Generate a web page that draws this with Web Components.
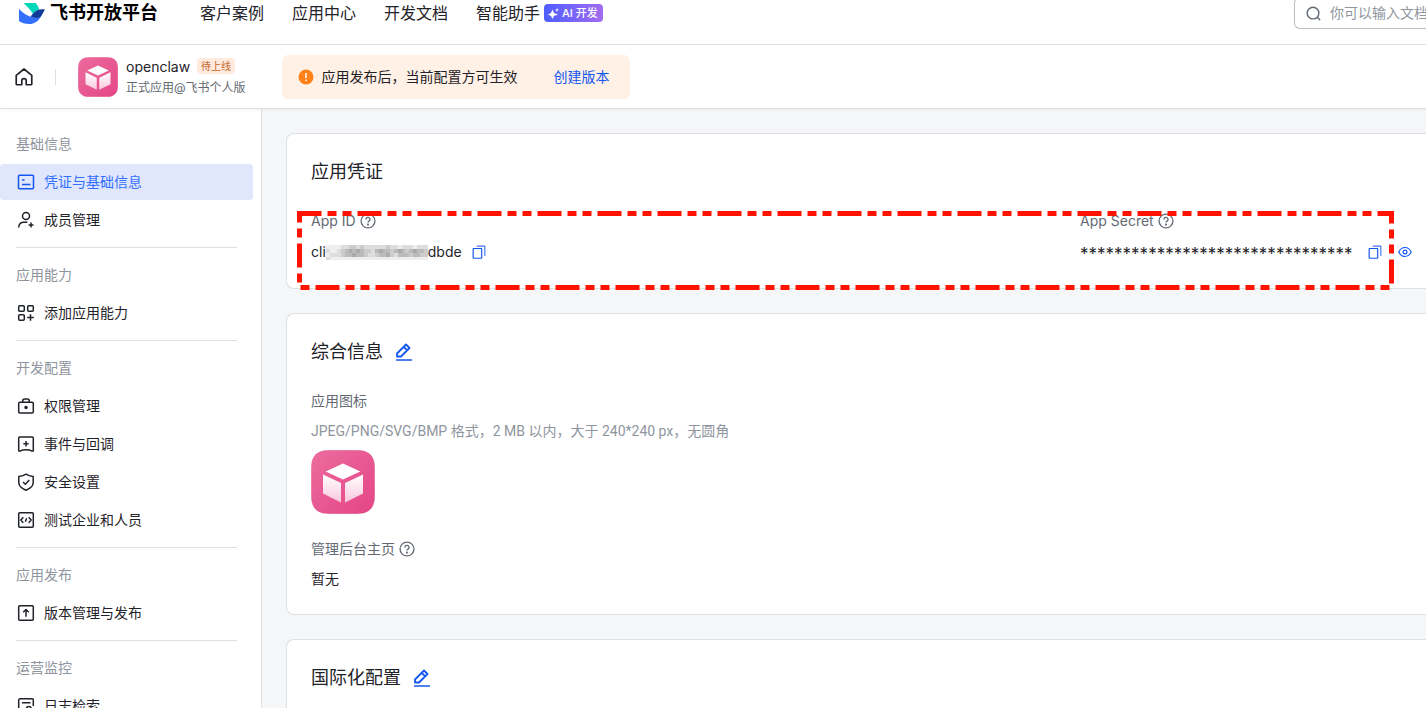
<!DOCTYPE html>
<html lang="zh-CN">
<head>
<meta charset="utf-8">
<meta name="viewport" content="width=device-width, initial-scale=1">
<title>飞书开放平台</title>
<style>
  html {
    --text: #1f2329;
    --muted: #646a73;
    --faint: #8f959e;
    --line: #dee0e3;
    --blue: #1456f0;
    height: 100%;
  }

  body {
    margin: 0;
    height: 100%;
    overflow: hidden;
    font-family: Inter, "Noto Sans CJK SC", sans-serif;
    font-size: 14px;
    line-height: 22px;
    color: var(--text);
  }
</style>
</head>
<body>
<op-app></op-app>

<script>
const icons = {
  home: '<path d="M2 7.500 9 1.800l7 5.700v7.700a.8.8 0 0 1-.8.8h-4.200v-3.500a2 2 0 0 0-4 0V16H2.800a.8.8 0 0 1-.8-.8z"/>',
  search: '<circle cx="8.500" cy="8.500" r="6.200"/><path d="m13 13 3 3"/>',
  card: '<rect x="1.500" y="2.200" width="15" height="13.600" rx="1"/><path d="M5 7h2.500M5 11.500h8.500"/>',
  member: '<circle cx="9" cy="5" r="3.500"/><path d="M1.800 16.500v-1a5 5 0 0 1 5-4.200h3.500M14 11.500v5M11.500 14h5"/>',
  apps: '<rect x="1.700" y="1.700" width="5.600" height="5.600" rx="1"/><rect x="10.700" y="1.700" width="5.600" height="5.600" rx="1"/><rect x="1.700" y="10.700" width="5.600" height="5.600" rx="1"/><path d="M13.500 10.200v6.600M10.200 13.500h6.600"/>',
  lock: '<rect x="1.700" y="5.200" width="14.600" height="10.800" rx="1.200"/><path d="M5.700 5V4a2 2 0 0 1 2-2h2.600a2 2 0 0 1 2 2v1"/><circle cx="9" cy="10.500" r="1" fill="currentColor"/>',
  event: '<path d="M1.700 16V3a1 1 0 0 1 1-1h12.600a1 1 0 0 1 1 1v13h-1.800c-1-.8-3-1.200-5.500-1.200S4.500 15.200 3.500 16zM9 6v5.400M6.300 8.700h5.400"/>',
  shield: '<path d="M9 1.200c2 1.400 4.500 2 7.200 2.200v6c0 3.600-3 6-7.200 7.800-4.200-1.800-7.200-4.200-7.200-7.800v-6C4.500 3.200 7 2.600 9 1.200z"/><path d="m6 9 2.300 2.200L12.300 7"/>',
  code: '<rect x="1.700" y="1.700" width="14.600" height="14.600" rx="1"/><path d="M6.300 6.200 3.800 9l2.500 2.800M11.700 6.200 14.200 9l-2.500 2.800M9.700 7.200l-1.400 3.600"/>',
  publish: '<rect x="1.700" y="1.700" width="14.600" height="14.600" rx="1"/><path d="M9 12.800V5.800M6.200 8.200 9 5.500l2.800 2.700"/>',
  log: '<path d="M8 16.300H2.700a1 1 0 0 1-1-1V3.200a1.500 1.500 0 0 1 1.500-1.500h12.100a1 1 0 0 1 1 1V9M5 5.800h8.500"/><circle cx="11.800" cy="12" r="2.500"/><path d="m13.800 14 2.500 2.500"/>',
  help: '<circle cx="9" cy="9" r="7.800"/><path d="M6.700 7.200a2.300 2.300 0 1 1 3.400 2c-.8.5-1.100.8-1.100 1.600"/><circle cx="9" cy="13" r=".5" fill="currentColor"/>',
  copy: '<rect x="1.500" y="4.500" width="11" height="12.500" rx=".5"/><path d="M6 1.500h10.500V14" opacity=".8"/>',
  eye: '<path d="M1 9c1.700-3.500 4.500-5.800 8-5.800S15.300 5.500 17 9c-1.700 3.500-4.500 5.800-8 5.800S2.700 12.500 1 9z"/><circle cx="9" cy="9" r="2.500"/>',
  edit: '<path d="M1 17h16" stroke-width="1.500"/><path d="M2 13.500V10.500L11 1.500l3.500 3.500L6 13.500z M8.800 4 12 7.200" stroke-width="1.800"/>'
};

class OpIcon extends HTMLElement {
  connectedCallback() {
    this.attachShadow({ mode: "open" });
    this.shadowRoot.innerHTML = `
      <style>
        :host {
          display: block;
          flex: none;
          width: 18px;
          height: 18px;
        }
        svg {
          display: block;
          width: 100%;
          height: 100%;
          fill: none;
          stroke: currentColor;
          stroke-width: 1.5;
          stroke-linejoin: round;
        }
      </style>
      <svg viewBox="0 0 18 18" aria-hidden="true">${icons[this.getAttribute("name")]}</svg>
    `;
  }
}

class OpAppLogo extends HTMLElement {
  constructor() {
    super();
    this.attachShadow({ mode: "open" });
    this.shadowRoot.innerHTML = `
      <style>
        :host {
          display: block;
          flex: none;
          width: 40px;
          height: 40px;
        }
        svg {
          display: block;
          width: 100%;
          height: 100%;
        }
      </style>
      <svg viewBox="0 0 64 64" role="img" aria-label="openclaw">
        <defs>
          <linearGradient id="bg" x1="0" y1="0" x2="1" y2="1">
            <stop offset="0" stop-color="#ec6c9e"/>
            <stop offset="1" stop-color="#e44586"/>
          </linearGradient>
          <linearGradient id="side" x1="0" y1="0" x2="0" y2="1">
            <stop offset="0" stop-color="#fff"/>
            <stop offset="1" stop-color="#f8c8dc"/>
          </linearGradient>
        </defs>
        <path fill="url(#bg)" stroke="#d0407c" stroke-opacity=".4" stroke-width=".6" d="M18 .3h28C58 .3 63.700 6 63.700 18v28C63.700 58 58 63.700 46 63.700H18C6 63.700.3 58 .3 46V18C.3 6 6 .3 18 .3z"/>
        <path fill="#fff" d="M32 13.500 49.300 21.500 32 29.500 14.700 21.500z"/>
        <path fill="url(#side)" d="M12 24.500 30 33v19.500L12 43.500zM52 24.500 34 33v19.500l18-9z"/>
      </svg>
    `;
  }
}

class OpHeader extends HTMLElement {
  constructor() {
    super();
    this.attachShadow({ mode: "open" });
    this.shadowRoot.innerHTML = `
      <style>
        :host {
          display: block;
          border-bottom: 1px solid var(--line);
        }
        header {
          display: flex;
          align-items: center;
          height: 26px;
          padding: 0 0 18px 18px;
          font-size: 16px;
          white-space: nowrap;
        }
        a {
          color: inherit;
          text-decoration: none;
        }
        .brand {
          display: flex;
          align-items: center;
          gap: 4px;
          font-size: 18px;
          font-weight: 700;
          color: #000;
        }
        .brand svg {
          width: 28px;
          height: 24px;
        }
        nav {
          display: flex;
          gap: 28px;
          flex: 1;
          margin-left: 42px;
        }
        .assistant {
          display: flex;
          align-items: center;
          gap: 4px;
        }
        .ai {
          display: flex;
          align-items: center;
          gap: 3px;
          box-sizing: border-box;
          height: 18px;
          padding: 0 5px 0 4px;
          border-radius: 4px;
          background: linear-gradient(90deg, #4e5eff, #a36cf0);
          color: #fff;
          font-size: 11px;
          font-weight: 500;
          line-height: 18px;
        }
        .ai svg {
          width: 11px;
          height: 11px;
        }
        .search {
          display: flex;
          align-items: center;
          gap: 8px;
          flex: none;
          box-sizing: border-box;
          width: 132px;
          height: 32px;
          padding-left: 10px;
          border: 1px solid #bbbfc4;
          border-right: 0;
          border-radius: 6px 0 0 6px;
          color: var(--muted);
        }
        .search op-icon {
          width: 17px;
          height: 17px;
        }
        input {
          flex: 1;
          min-width: 0;
          padding: 0;
          border: 0;
          outline: 0;
          background: none;
          font: inherit;
          font-size: 14px;
        }
        input::placeholder {
          color: var(--faint);
        }
      </style>
      <header>
        <a class="brand" href="#">
          <svg viewBox="0 0 28 24" aria-hidden="true">
            <path fill="#00d6b9" d="M5.500 2h12c2 2 3.200 4.200 3.700 6.500-2 .7-4 2-6.200 4.300C12.300 9 9 5 5.500 2z"/>
            <path fill="#3370ff" d="M1 8c4.500 4.500 9.500 7.800 15 8.500 3 .3 5.700-.8 8-2.800C21 20 16.500 23 11 23c-4 0-7.500-1.300-10-3z"/>
            <path fill="#133c9a" d="M12.500 15.500C16 11 20 7 27 8.500c-2 2.500-2.500 6-5 7.500-3 1.600-6.500 1-9.500-.5z"/>
          </svg>
          飞书开放平台
        </a>
        <nav>
          <a href="#">客户案例</a>
          <a href="#">应用中心</a>
          <a href="#">开发文档</a>
          <a href="#" class="assistant">智能助手
            <span class="ai">
              <svg viewBox="0 0 11 11" fill="#fff" aria-hidden="true"><path d="M4.500 1.500 6 5l4 1.500L6 8l-1.500 3L3 8 0 6.500 3 5zM9 0l.6 1.400L11 2l-1.400.6L9 4l-.6-1.400L7 2l1.400-.6z"/></svg>
              AI 开发
            </span>
          </a>
        </nav>
        <label class="search">
          <op-icon name="search"></op-icon>
          <input type="text" placeholder="你可以输入文档" aria-label="搜索">
        </label>
      </header>
    `;
  }
}

class OpAppBar extends HTMLElement {
  constructor() {
    super();
    this.attachShadow({ mode: "open" });
    this.shadowRoot.innerHTML = `
      <style>
        :host {
          display: flex;
          align-items: center;
          position: relative;
          height: 63px;
          padding-left: 14px;
          border-bottom: 1px solid var(--line);
          box-shadow: 0 1px 3px rgba(31, 35, 41, .06);
          white-space: nowrap;
        }
        a {
          color: inherit;
          text-decoration: none;
        }
        .home op-icon {
          width: 20px;
          height: 20px;
        }
        .split {
          width: 1px;
          height: 16px;
          margin: 0 22px 0 21px;
          background: var(--line);
        }
        .info {
          margin: 0 36px 0 8px;
          line-height: 21px;
        }
        .name {
          display: flex;
          align-items: center;
          gap: 7px;
        }
        .tag {
          padding: 0 4px;
          border-radius: 4px;
          background: #ffeadd;
          color: #c4662b;
          font-size: 10px;
          line-height: 16px;
        }
        .owner {
          color: var(--muted);
          font-size: 12px;
        }
        .notice {
          display: flex;
          align-items: center;
          gap: 8px;
          box-sizing: border-box;
          height: 44px;
          padding: 0 20px 0 16px;
          border-radius: 6px;
          background: #fff1e5;
        }
        .notice svg {
          width: 16px;
          height: 16px;
        }
        .notice a {
          margin-left: 28px;
          color: var(--blue);
        }
      </style>
      <a class="home" href="#" aria-label="首页"><op-icon name="home"></op-icon></a>
      <span class="split"></span>
      <op-app-logo></op-app-logo>
      <div class="info">
        <div class="name">openclaw <span class="tag">待上线</span></div>
        <div class="owner">正式应用@飞书个人版</div>
      </div>
      <div class="notice">
        <svg viewBox="0 0 16 16" aria-hidden="true">
          <circle cx="8" cy="8" r="7.500" fill="#ff811a"/>
          <path d="M8 4v5M8 10.500v1.500" stroke="#fff" stroke-width="1.500"/>
        </svg>
        <span>应用发布后，当前配置方可生效</span>
        <a href="#">创建版本</a>
      </div>
    `;
  }
}

class OpMenuGroup extends HTMLElement {
  connectedCallback() {
    this.attachShadow({ mode: "open" });
    this.shadowRoot.innerHTML = `
      <style>
        :host {
          display: block;
        }
        h2 {
          margin: 0;
          padding: 0 0 9px 16px;
          color: var(--faint);
          font-size: 14px;
          font-weight: 400;
        }
        .items {
          display: grid;
          gap: 2px;
        }
        :host(:not(:first-of-type))::before {
          content: "";
          display: block;
          height: 1px;
          margin: 9px 24px 16px 16px;
          background: var(--line);
        }
      </style>
      <h2>${this.getAttribute("label")}</h2>
      <div class="items"><slot></slot></div>
    `;
  }
}

class OpMenuItem extends HTMLElement {
  connectedCallback() {
    this.attachShadow({ mode: "open" });
    this.shadowRoot.innerHTML = `
      <style>
        :host {
          display: block;
          margin-right: 8px;
        }
        a {
          display: flex;
          align-items: center;
          gap: 9px;
          height: 36px;
          padding-left: 17px;
          border-radius: 4px;
          color: inherit;
          text-decoration: none;
        }
        :host([active]) a {
          background: #e0e6fc;
          color: #3370ff;
        }
        :host([active]) op-icon {
          color: var(--blue);
        }
      </style>
      <a href="#"><op-icon name="${this.getAttribute("icon")}"></op-icon><slot></slot></a>
    `;
  }
}

class OpSidebar extends HTMLElement {
  constructor() {
    super();
    this.attachShadow({ mode: "open" });
    this.shadowRoot.innerHTML = `
      <style>
        :host {
          display: block;
          box-sizing: border-box;
          padding-top: 24px;
          border-right: 1px solid var(--line);
          overflow: hidden;
        }
      </style>
      <nav>
        <op-menu-group label="基础信息">
          <op-menu-item icon="card" active>凭证与基础信息</op-menu-item>
          <op-menu-item icon="member">成员管理</op-menu-item>
        </op-menu-group>
        <op-menu-group label="应用能力">
          <op-menu-item icon="apps">添加应用能力</op-menu-item>
        </op-menu-group>
        <op-menu-group label="开发配置">
          <op-menu-item icon="lock">权限管理</op-menu-item>
          <op-menu-item icon="event">事件与回调</op-menu-item>
          <op-menu-item icon="shield">安全设置</op-menu-item>
          <op-menu-item icon="code">测试企业和人员</op-menu-item>
        </op-menu-group>
        <op-menu-group label="应用发布">
          <op-menu-item icon="publish">版本管理与发布</op-menu-item>
        </op-menu-group>
        <op-menu-group label="运营监控">
          <op-menu-item icon="log">日志检索</op-menu-item>
        </op-menu-group>
      </nav>
    `;
  }
}

class OpIconButton extends HTMLElement {
  connectedCallback() {
    this.attachShadow({ mode: "open" });
    this.shadowRoot.innerHTML = `
      <style>
        :host {
          display: block;
          --size: 14px;
        }
        button {
          display: block;
          padding: 0;
          border: 0;
          background: none;
          color: var(--blue);
          cursor: pointer;
        }
        op-icon {
          width: var(--size);
          height: var(--size);
        }
      </style>
      <button type="button" aria-label="${this.getAttribute("label")}"><op-icon name="${this.getAttribute("icon")}"></op-icon></button>
    `;
  }
}

class OpCard extends HTMLElement {
  connectedCallback() {
    this.attachShadow({ mode: "open" });
    this.shadowRoot.innerHTML = `
      <style>
        :host {
          display: block;
          position: relative;
          padding: 25px 0 24px 24px;
          border: 1px solid var(--line);
          border-right: 0;
          border-radius: 8px 0 0 8px;
          background: #fff;
        }
        .title {
          display: flex;
          align-items: center;
          gap: 12px;
          margin-bottom: 25px;
        }
        h1 {
          margin: 0;
          font-size: 18px;
          font-weight: 400;
          line-height: 26px;
        }
        op-icon-button {
          --size: 18px;
        }
      </style>
      <div class="title">
        <h1>${this.getAttribute("heading")}</h1>
        ${this.hasAttribute("editable") ? '<op-icon-button icon="edit" label="编辑"></op-icon-button>' : ""}
      </div>
      <slot></slot>
    `;
  }
}

class OpField extends HTMLElement {
  connectedCallback() {
    this.attachShadow({ mode: "open" });
    this.shadowRoot.innerHTML = `
      <style>
        :host {
          display: block;
        }
        .label {
          display: flex;
          align-items: center;
          gap: 4px;
          margin-bottom: 8px;
          color: var(--muted);
        }
        .label op-icon {
          width: 16px;
          height: 16px;
        }
      </style>
      <div class="label">${this.getAttribute("label")}${this.hasAttribute("help") ? '<op-icon name="help"></op-icon>' : ""}</div>
      <slot></slot>
    `;
  }
}

// grey blocks that hide the middle of an id
class OpMosaic extends HTMLElement {
  constructor() {
    super();
    this.attachShadow({ mode: "open" });
    const rows = [
      "eeeeddccdcddddddcddedddeddd",
      "deedcbababccdbabbcbabcbabbc",
      "edddcbbabbcddcbbacdbbbcbbcc",
      "deeeeeeeeeeeeeeeeeeeeeeeeee"
    ];
    const cells = rows.map((row, y) => [...row].map((c, x) =>
      `<rect x="${x * 4}" y="${y * 4}" width="4" height="4" fill="#${c}${c}${c}"/>`).join("")).join("");
    this.shadowRoot.innerHTML = `
      <style>
        :host {
          display: block;
          width: 102px;
          height: 15px;
        }
        svg {
          display: block;
          width: 100%;
          height: 100%;
        }
      </style>
      <svg viewBox="0 0 108 15" preserveAspectRatio="none" shape-rendering="crispEdges" aria-hidden="true">${cells}</svg>
    `;
  }
}

class OpHighlight extends HTMLElement {
  constructor() {
    super();
    this.attachShadow({ mode: "open" });
    this.shadowRoot.innerHTML = `
      <style>
        :host {
          display: block;
          pointer-events: none;
        }
        svg {
          display: block;
          width: 100%;
          height: 100%;
        }
        rect {
          x: 2.5px;
          y: 2.5px;
          width: calc(100% - 5px);
          height: calc(100% - 5px);
          fill: none;
          stroke: #ff1200;
          stroke-width: 5px;
          stroke-dasharray: 24 6 9 6 9 6;
          stroke-dashoffset: 2px;
        }
      </style>
      <svg aria-hidden="true"><rect/></svg>
    `;
  }
}

class OpMain extends HTMLElement {
  constructor() {
    super();
    this.attachShadow({ mode: "open" });
    this.shadowRoot.innerHTML = `
      <style>
        :host {
          display: block;
          background: #f5f6f7;
          overflow: hidden;
        }
        main {
          display: grid;
          gap: 24px;
          padding: 24px 0 24px 24px;
        }
        .credentials {
          display: grid;
          grid-template-columns: 1fr 346px;
        }
        .value {
          display: flex;
          align-items: center;
          height: 24px;
        }
        .value op-icon-button {
          margin-left: 10px;
        }
        .value op-icon-button + op-icon-button {
          margin-left: 16px;
        }
        .secret {
          min-width: 278px;
          padding-top: 4px;
          font-size: 17px;
        }
        op-highlight {
          position: absolute;
          inset: 77px 32px -2px 10px;
        }
        p {
          margin: 0;
        }
        .hint {
          margin-bottom: 8px;
          color: var(--faint);
          font-family: Roboto, "Noto Sans CJK SC", sans-serif;
        }
        op-app-logo {
          width: 64px;
          height: 64px;
          margin-bottom: 24px;
        }
      </style>
      <main>
        <op-card heading="应用凭证">
          <div class="credentials">
            <op-field label="App ID" help>
              <div class="value">cli<op-mosaic></op-mosaic>dbde<op-icon-button icon="copy" label="复制 App ID"></op-icon-button></div>
            </op-field>
            <op-field label="App Secret" help>
              <div class="value"><span class="secret">********************************</span><op-icon-button icon="copy" label="复制 App Secret"></op-icon-button><op-icon-button icon="eye" label="显示 App Secret"></op-icon-button></div>
            </op-field>
          </div>
          <op-highlight></op-highlight>
        </op-card>
        <op-card heading="综合信息" editable>
          <op-field label="应用图标">
            <p class="hint">JPEG/PNG/SVG/BMP 格式，2 MB 以内，大于 240*240 px，无圆角</p>
            <op-app-logo></op-app-logo>
          </op-field>
          <op-field label="管理后台主页" help>
            <p>暂无</p>
          </op-field>
        </op-card>
        <op-card heading="国际化配置" editable></op-card>
      </main>
    `;
  }
}

class OpApp extends HTMLElement {
  constructor() {
    super();
    this.attachShadow({ mode: "open" });
    this.shadowRoot.innerHTML = `
      <style>
        :host {
          display: flex;
          flex-direction: column;
          height: 100%;
          background: #fff;
        }
        .body {
          display: grid;
          grid-template-columns: 262px 1fr;
          flex: 1;
          min-height: 0;
        }
      </style>
      <op-header></op-header>
      <op-app-bar></op-app-bar>
      <div class="body">
        <op-sidebar></op-sidebar>
        <op-main></op-main>
      </div>
    `;
  }
}

customElements.define("op-icon", OpIcon);
customElements.define("op-app-logo", OpAppLogo);
customElements.define("op-icon-button", OpIconButton);
customElements.define("op-header", OpHeader);
customElements.define("op-app-bar", OpAppBar);
customElements.define("op-menu-group", OpMenuGroup);
customElements.define("op-menu-item", OpMenuItem);
customElements.define("op-sidebar", OpSidebar);
customElements.define("op-card", OpCard);
customElements.define("op-field", OpField);
customElements.define("op-mosaic", OpMosaic);
customElements.define("op-highlight", OpHighlight);
customElements.define("op-main", OpMain);
customElements.define("op-app", OpApp);
</script>
</body>
</html>
